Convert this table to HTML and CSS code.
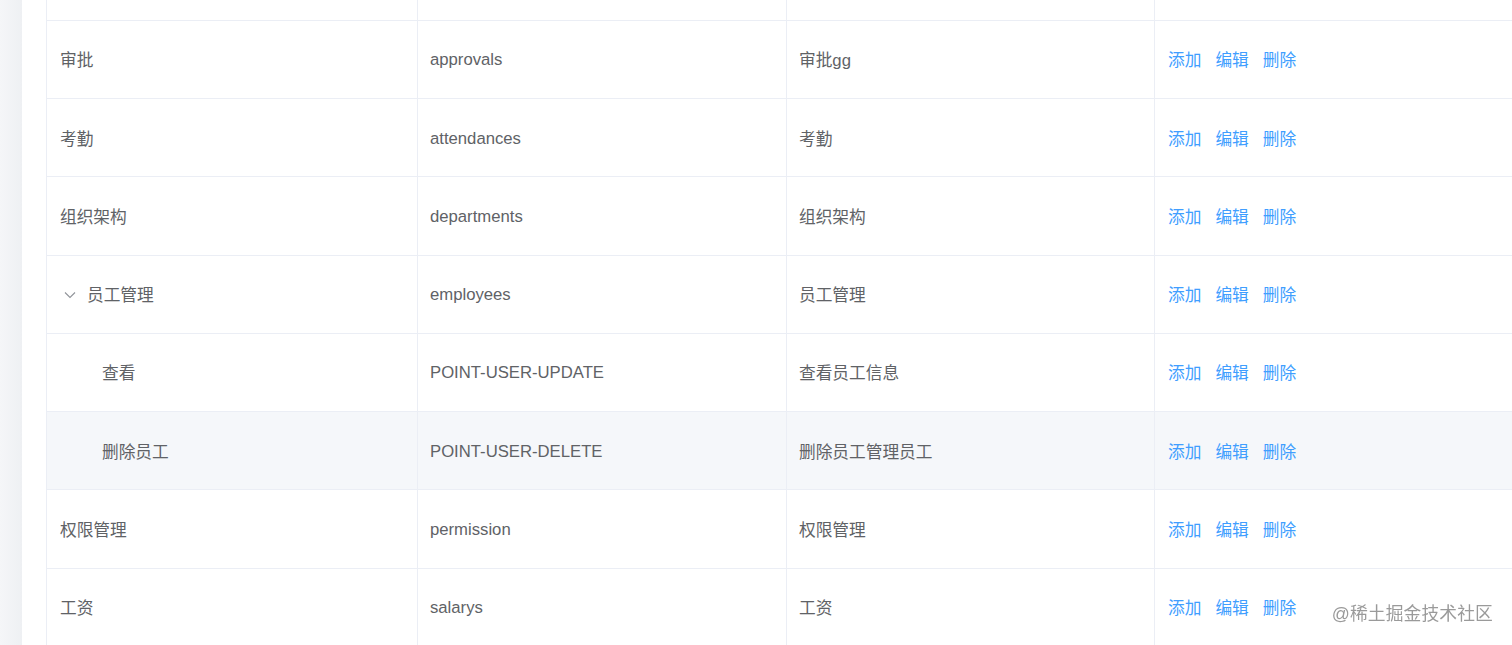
FILE: index.html
```html
<!DOCTYPE html>
<html lang="zh-CN">
<head>
<meta charset="utf-8">
<title>权限管理</title>
<link rel="stylesheet" href="styles.css">
</head>
<body>
<div class="layout">
  <aside class="side"></aside>
  <main class="main">
    <div class="table">
      <div class="row partial">
        <div class="cell"></div><div class="cell en"></div><div class="cell"></div><div class="cell"></div>
      </div>
      <div class="row">
        <div class="cell">审批</div>
        <div class="cell en">approvals</div>
        <div class="cell">审批gg</div>
        <div class="cell ops"><a>添加</a><a>编辑</a><a>删除</a></div>
      </div>
      <div class="row">
        <div class="cell">考勤</div>
        <div class="cell en">attendances</div>
        <div class="cell">考勤</div>
        <div class="cell ops"><a>添加</a><a>编辑</a><a>删除</a></div>
      </div>
      <div class="row">
        <div class="cell">组织架构</div>
        <div class="cell en">departments</div>
        <div class="cell">组织架构</div>
        <div class="cell ops"><a>添加</a><a>编辑</a><a>删除</a></div>
      </div>
      <div class="row">
        <div class="cell"><span class="expand"><svg width="12" height="8" viewBox="0 0 12 8"><path d="M1 1.5 L6 6.5 L11 1.5" fill="none" stroke="#909399" stroke-width="1.1"/></svg></span>员工管理</div>
        <div class="cell en">employees</div>
        <div class="cell">员工管理</div>
        <div class="cell ops"><a>添加</a><a>编辑</a><a>删除</a></div>
      </div>
      <div class="row">
        <div class="cell child">查看</div>
        <div class="cell en">POINT-USER-UPDATE</div>
        <div class="cell">查看员工信息</div>
        <div class="cell ops"><a>添加</a><a>编辑</a><a>删除</a></div>
      </div>
      <div class="row hover">
        <div class="cell child">删除员工</div>
        <div class="cell en">POINT-USER-DELETE</div>
        <div class="cell">删除员工管理员工</div>
        <div class="cell ops"><a>添加</a><a>编辑</a><a>删除</a></div>
      </div>
      <div class="row">
        <div class="cell">权限管理</div>
        <div class="cell en">permission</div>
        <div class="cell">权限管理</div>
        <div class="cell ops"><a>添加</a><a>编辑</a><a>删除</a></div>
      </div>
      <div class="row">
        <div class="cell">工资</div>
        <div class="cell en">salarys</div>
        <div class="cell">工资</div>
        <div class="cell ops"><a>添加</a><a>编辑</a><a>删除</a></div>
      </div>
    </div>
  </main>
</div>
<div class="watermark">@稀土掘金技术社区</div>
</body>
</html>
```

FILE: styles.css
```css
html, body {
  margin: 0;
  padding: 0;
  height: 100%;
  overflow: hidden;
  background: #ffffff;
}

body {
  font-family: "Liberation Sans", "Noto Sans CJK SC", sans-serif;
  font-size: 16.7px;
  color: #606266;
}

.layout {
  display: flex;
  height: 100%;
}

.side {
  width: 22px;
  flex: none;
  background: linear-gradient(to right, #f5f6f8, #eef0f3);
}

.main {
  flex: 1;
  padding-left: 24px;
  overflow: hidden;
}

.table {
  margin-top: -57.5px;
  border-left: 1px solid #ebeef5;
  width: 1480px;
}

.row {
  display: grid;
  grid-template-columns: 371px 369px 368px 372px;
}

.row.hover .cell {
  background: #f5f7fa;
}

.cell {
  height: 77.25px;
  box-sizing: content-box;
  border-right: 1px solid #ebeef5;
  border-bottom: 1px solid #ebeef5;
  padding: 0 13px 0 12px;
  display: flex;
  align-items: center;
  white-space: nowrap;
}

.cell.en {
  height: 75.25px;
  padding-top: 2px;
}

.row .cell:first-child {
  padding-left: 13px;
}

.cell.child {
  padding-left: 55px !important;
}

.expand {
  width: 20px;
  margin-right: 7px;
  display: inline-flex;
  justify-content: center;
  align-items: center;
  padding-top: 1px;
}

.ops {
  gap: 14px;
  padding-left: 13px;
}

.ops a {
  color: #409eff;
  cursor: pointer;
}

.watermark {
  position: fixed;
  right: 19px;
  bottom: 20px;
  font-size: 17.8px;
  color: rgba(120, 120, 120, 0.75);
  letter-spacing: 0.1px;
}
```
